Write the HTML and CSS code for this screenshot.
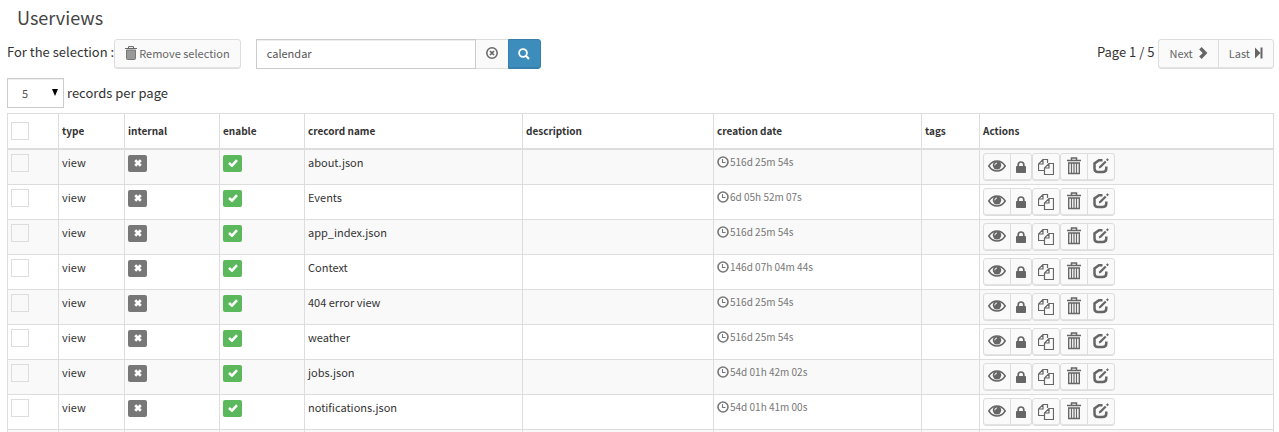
FILE: index.html
```
<!DOCTYPE html>
<html lang="en">
<head>
<meta charset="utf-8">
<title>Userviews</title>
<link rel="stylesheet" href="styles.css">
</head>
<body>
<svg class="sprite" aria-hidden="true">
  <symbol id="trash" viewBox="0 0 14 18"><path d="M0 3.5h14M4.5 3V1h5v2" fill="none" stroke="currentColor" stroke-width="1.5"/><path d="M1.7 6v10.5h10.6V6z" fill="none" stroke="currentColor" stroke-width="1.4"/><path d="M4.5 6v10M7 6v10M9.500 6v10" stroke="currentColor" stroke-width="1.2"/></symbol>
  <symbol id="bin" viewBox="0 0 12 14"><path d="M1.500 4h9v8.500q0 1-1 1h-7q-1 0-1-1z" fill="#999" stroke="#777"/><path d="M0 2.500h12M3.500 2V.6h5V2" fill="none" stroke="currentColor"/></symbol>
  <symbol id="clear" viewBox="0 0 12 12"><circle cx="6" cy="6" r="5.200" fill="none" stroke="currentColor" stroke-width="1.500"/><path d="M4 4l4 4M8 4L4 8" stroke="currentColor" stroke-width="1.700"/></symbol>
  <symbol id="search" viewBox="0 0 12 12"><circle cx="5" cy="5" r="3.900" fill="none" stroke="currentColor" stroke-width="1.800"/><path d="M7.800 7.800l3.200 3.200" stroke="currentColor" stroke-width="2.200"/></symbol>
  <symbol id="next" viewBox="0 0 10 12"><path d="M1.200 2.400L3.600 0l5.800 6-5.800 6-2.400-2.400L4.700 6z" fill="currentColor"/></symbol>
  <symbol id="last" viewBox="0 0 8 12"><path d="M0 .5L5.500 6 0 11.500zM5.500 .5h2v11h-2z" fill="currentColor"/></symbol>
  <symbol id="cross" viewBox="0 0 8 8"><path d="M1.200 1.200l5.600 5.600M6.800 1.200L1.200 6.800" stroke="currentColor" stroke-width="2.700"/></symbol>
  <symbol id="check" viewBox="0 0 10 8"><path d="M1 4l3 2.700L9 1.200" fill="none" stroke="currentColor" stroke-width="2.500"/></symbol>
  <symbol id="clock" viewBox="0 0 12 12"><circle cx="6" cy="6" r="5" fill="none" stroke="currentColor" stroke-width="1.600"/><path d="M5.500 3v3.500H8.500" fill="none" stroke="currentColor" stroke-width="1.100"/></symbol>
  <symbol id="eye" viewBox="0 0 18 12"><path d="M.8 6Q4 1 9 1t8.200 5Q14 11 9 11T.8 6z" fill="none" stroke="currentColor" stroke-width="1.500"/><circle cx="9" cy="5.200" r="4.200" fill="currentColor"/><path d="M6.800 5.300A2.300 2.300 0 0 1 9 3" fill="none" stroke="#fafafa"/></symbol>
  <symbol id="lock" viewBox="0 0 10 12"><rect y="5" width="10" height="7" rx=".8" fill="currentColor"/><path d="M2.200 6V3.800a2.800 2.800 0 0 1 5.600 0V6" fill="none" stroke="currentColor" stroke-width="1.700"/></symbol>
  <symbol id="copy" viewBox="0 0 16 16"><path d="M6.500 11.500h-6V5L5 .5h4.500V4M5 .5V5H.5" fill="none" stroke="currentColor" stroke-width="1.200"/><path d="M11 4.500h4.500v11h-9V9zM11 4.500V9H6.500" fill="#fafafa" stroke="currentColor" stroke-width="1.200"/></symbol>
  <symbol id="edit" viewBox="0 0 16 16"><path d="M9.500 2.200H6L1.500 5.500v5Q1.500 14 5 14h4.500Q13.300 14 13.300 10.500V8.500" fill="none" stroke="currentColor" stroke-width="2.500"/><path d="M5.800 10.400l.5-2.200 5.700-5.500 1.500 1.500L8 9.700z" fill="currentColor"/><path d="M13.700 1l1.500 1.500" stroke="currentColor" stroke-width="2"/></symbol>
</svg>

<h1 class="title">Userviews</h1>

<div class="toolbar">
  <span class="text">For the selection :</span>
  <button class="btn remove" type="button"><svg class="i-bin"><use href="#bin"/></svg>Remove selection</button>
  <form class="search">
    <input class="field" type="text" value="calendar" aria-label="Search">
    <button class="btn clear" type="button" aria-label="Clear"><svg class="i12"><use href="#clear"/></svg></button>
    <button class="btn go" type="button" aria-label="Search"><svg class="i12"><use href="#search"/></svg></button>
  </form>
  <span class="text pages">Page 1 / 5</span>
  <div class="group">
    <button class="btn" type="button">Next <svg class="i-next"><use href="#next"/></svg></button>
    <button class="btn" type="button">Last <svg class="i-last"><use href="#last"/></svg></button>
  </div>
</div>

<label class="per-page">
  <span class="select"><select><option>5</option><option>10</option><option>20</option></select></span>
  records per page
</label>

<table class="records">
  <colgroup><col class="c-check"><col class="c-type"><col class="c-internal"><col class="c-enable"><col class="c-name"><col class="c-desc"><col class="c-date"><col class="c-tags"><col></colgroup>
  <thead>
    <tr><th><input type="checkbox" aria-label="Select all"></th><th>type</th><th>internal</th><th>enable</th><th>crecord name</th><th>description</th><th>creation date</th><th>tags</th><th>Actions</th></tr>
  </thead>
  <tbody id="rows"></tbody>
</table>
<script src="app.js"></script>
</body>
</html>
```

FILE: app.js
```
const records = [
  ["about.json", "516d 25m 54s"],
  ["Events", "6d 05h 52m 07s"],
  ["app_index.json", "516d 25m 54s"],
  ["Context", "146d 07h 04m 44s"],
  ["404 error view", "516d 25m 54s"],
  ["weather", "516d 25m 54s"],
  ["jobs.json", "54d 01h 42m 02s"],
  ["notifications.json", "54d 01h 41m 00s"]
];

const icon = (name) => `<svg class="i-${name}"><use href="#${name}"/></svg>`;
const action = (name, label) =>
  `<button class="act act-${name}" type="button" aria-label="${label}">${icon(name)}</button>`;

const row = ([name, age]) => `<tr>
  <td><input type="checkbox" aria-label="Select ${name}"></td>
  <td>view</td>
  <td><span class="flag off">${icon("cross")}</span></td>
  <td><span class="flag on">${icon("check")}</span></td>
  <td>${name}</td>
  <td></td>
  <td><span class="age">${icon("clock")}${age}</span></td>
  <td></td>
  <td><div class="actions">
    <div class="group">${action("eye", "View")}${action("lock", "Rights")}</div>
    <div class="group">${action("copy", "Duplicate")}</div>
    <div class="group">${action("trash", "Remove")}${action("edit", "Edit")}</div>
  </div></td>
</tr>`;

const blank = `<tr>${"<td></td>".repeat(9)}</tr>`;
document.getElementById("rows").innerHTML = records.map(row).join("") + blank;
```

FILE: styles.css
```
* { box-sizing: border-box; }
html { overflow: hidden; }
body {
  margin: 0;
  padding: 0 5px 0 7px;
  background: #fff;
  color: #333;
  font: 13px/20px "Noto Sans CJK SC", "Open Sans", sans-serif;
}
button, input, select { font: inherit; margin: 0; }
svg { display: block; flex: none; }
.sprite { position: absolute; width: 0; height: 0; }

.title { margin: 0; padding: 5px 10px 10px; font-size: 18px; font-weight: 400; line-height: 24px; color: #444; }

.toolbar { display: flex; align-items: center; height: 30px; }
.text { padding-bottom: 4px; }
.btn {
  display: inline-flex; align-items: center; justify-content: center; gap: 5px;
  height: 30px; padding: 0 10px 2px;
  border: 1px solid #ddd; border-radius: 3px;
  background: #fafafa; color: #666;
  box-shadow: inset 0 -1px 0 rgba(0, 0, 0, .09);
  font-size: 11px; line-height: 16px; white-space: nowrap;
}
.remove { gap: 2px; }
.search { display: flex; flex: 0 1 285px; margin: 0 auto 0 15px; }
.field {
  flex: 1; min-width: 0; height: 30px; padding: 0 10px 2px;
  border: 1px solid #ccc; border-radius: 0; color: #555; font-size: 11px;
  box-shadow: inset 0 1px 1px rgba(0, 0, 0, .075);
}
.clear { width: 32px; padding: 0 0 2px; border-left: 0; border-right: 0; border-radius: 0; box-shadow: none; }
.go { width: 33px; padding: 0; border-color: #367fa9; border-radius: 0 3px 3px 0; background: #3c8dbc; color: #fff; }
.pages { margin-right: 4px; }
.group { display: flex; }
.group > :not(:first-child) { margin-left: -1px; border-top-left-radius: 0; border-bottom-left-radius: 0; }
.group > :not(:last-child) { border-top-right-radius: 0; border-bottom-right-radius: 0; }

.per-page { display: flex; align-items: center; gap: 3px; margin: 9px 0 5px; line-height: 22px; }
.select { position: relative; width: 57px; height: 30px; }
.select::after {
  content: ""; position: absolute; right: 6px; top: 11px;
  border: solid transparent; border-width: 7px 3px 0; border-top-color: #000;
  pointer-events: none;
}
.select select {
  appearance: none; width: 100%; height: 30px; padding: 0 14px;
  border: 1px solid #ccc; border-radius: 0; background: #fff; color: #555; font-size: 11px;
  box-shadow: inset 0 1px 1px rgba(0, 0, 0, .075);
}

.records { width: 100%; table-layout: fixed; border-collapse: collapse; }
.records th, .records td { border: 1px solid #ddd; padding: 3px; text-align: left; vertical-align: top; }
.records th { height: 35px; padding: 0 3px; border-bottom-width: 2px; vertical-align: middle; font-size: 10px; font-weight: 700; line-height: 16px; }
.records td { height: 35px; font-size: 11px; line-height: 18px; }
.records tbody tr:nth-child(odd) { background: #f9f9f9; }
.c-check { width: 51px; }
.c-type { width: 66px; }
.c-internal { width: 95px; }
.c-enable { width: 85px; }
.c-name { width: 218px; }
.c-desc { width: 191px; }
.c-date { width: 208px; }
.c-tags { width: 58px; }

input[type="checkbox"] {
  appearance: none; display: block; width: 18px; height: 18px;
  border: 1px solid #ddd; background: transparent;
}
.records td input[type="checkbox"] { margin-top: 1px; }
.flag { display: flex; align-items: center; justify-content: center; width: 19px; height: 17px; margin-top: 2px; border-radius: 2px; color: #fff; }
.off { background: #777; }
.on { background: #5cb85c; }
.age { display: flex; align-items: center; gap: 1px; color: #777; font-size: 10px; }
.actions { display: flex; }
.act {
  display: flex; align-items: center; justify-content: center;
  height: 28px; padding: 0 0 2px;
  border: 1px solid #ddd; border-radius: 3px; background: #fafafa; color: #666;
  box-shadow: inset 0 -1px 0 rgba(0, 0, 0, .09);
}
.act-eye, .act-copy, .act-trash, .act-edit { width: 28px; }
.act-lock { width: 22px; }
.act-lock, .act-copy { padding-bottom: 0; }

.i12, .i-clock { width: 12px; height: 12px; }
.i-bin { width: 12px; height: 14px; }
.i-next { width: 10px; height: 12px; }
.i-last { width: 8px; height: 12px; }
.i-cross { width: 8px; height: 8px; }
.i-check { width: 10px; height: 8px; }
.i-eye { width: 18px; height: 12px; }
.i-lock { width: 10px; height: 12px; }
.i-copy, .i-edit { width: 16px; height: 16px; }
.i-trash { width: 14px; height: 18px; }
```
